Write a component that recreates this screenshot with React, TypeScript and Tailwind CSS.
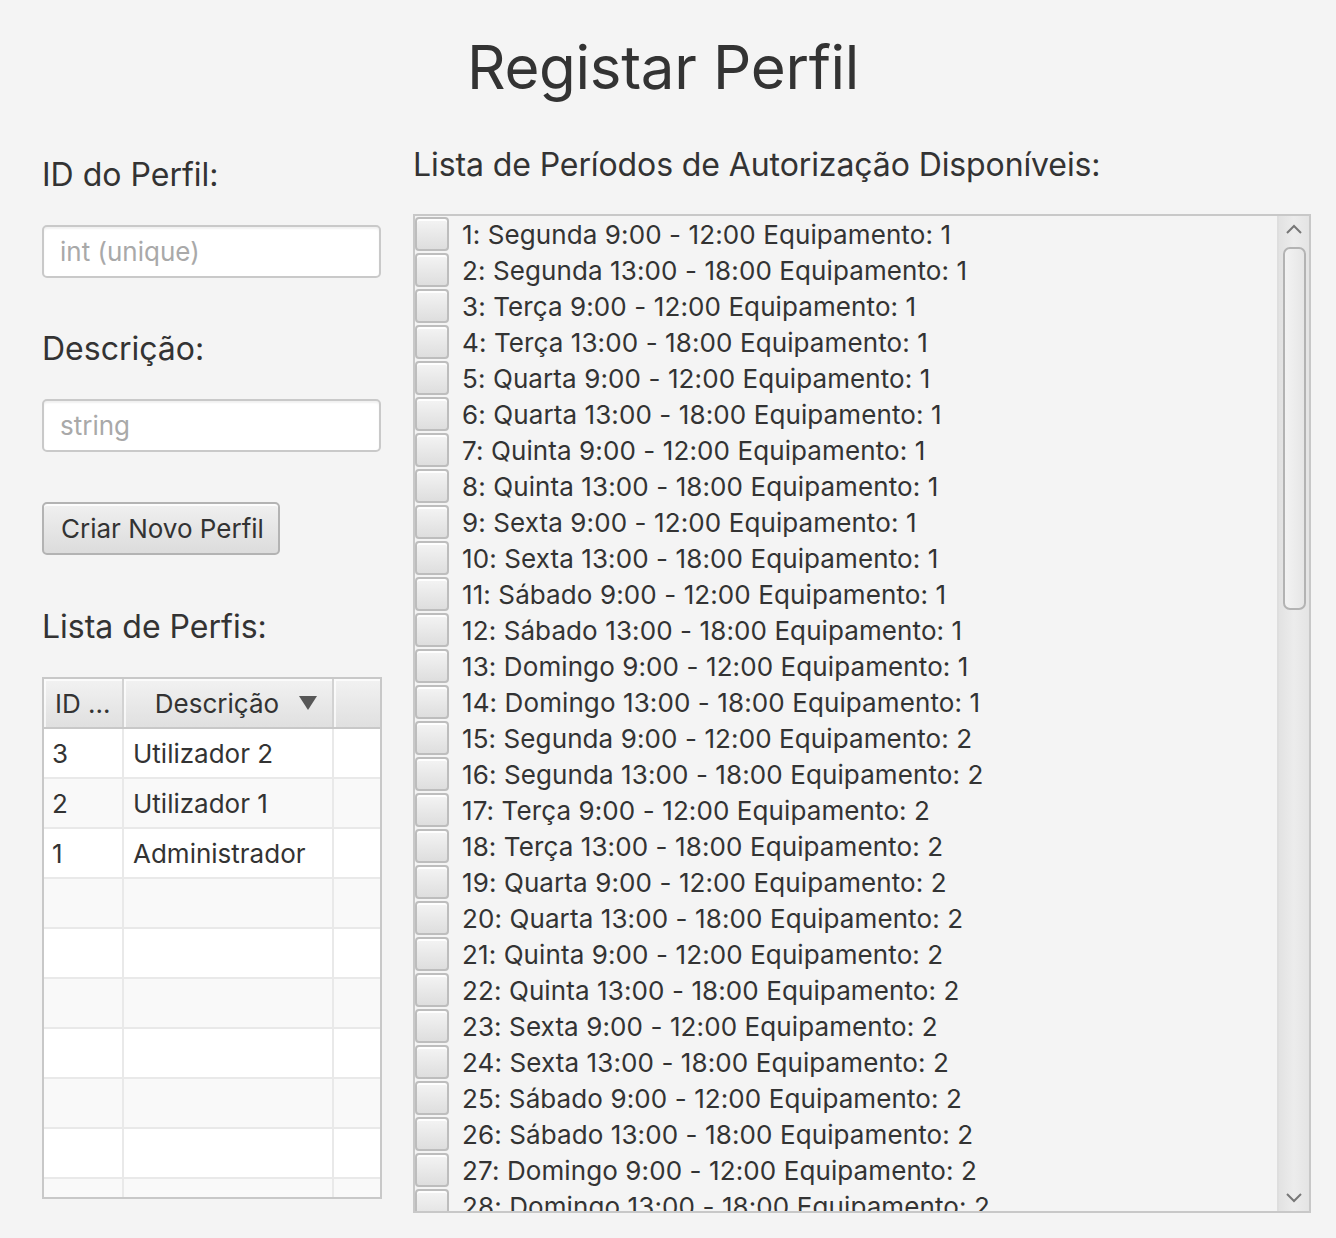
const dias = ["Segunda", "Terça", "Quarta", "Quinta", "Sexta", "Sábado", "Domingo"];

const periodos: string[] = [];
for (let eq = 1; eq <= 2; eq++) {
  dias.forEach((d) => {
    periodos.push(`${d} 9:00 - 12:00 Equipamento: ${eq}`);
    periodos.push(`${d} 13:00 - 18:00 Equipamento: ${eq}`);
  });
}

const perfis = [
  { id: "3", desc: "Utilizador 2" },
  { id: "2", desc: "Utilizador 1" },
  { id: "1", desc: "Administrador" },
];

const Field = ({ placeholder }: { placeholder: string }) => (
  <div className="h-[53px] w-[339px] rounded-[5px] border-2 border-[#c9c9c9] bg-white px-[16px] flex items-center shadow-[inset_0_2px_2px_rgba(0,0,0,0.06)]">
    <span className="text-[26px] text-[#a9a9a9]">{placeholder}</span>
  </div>
);

const CheckBox = () => (
  <div className="w-[34px] h-[34px] shrink-0 rounded-[4px] border-2 border-[#bdbdbd] bg-gradient-to-b from-[#f4f4f4] to-[#dedede] shadow-[inset_0_2px_0_rgba(255,255,255,0.9)]" />
);

const App = () => {
  const rows = Array.from({ length: 10 }, (_, i) => perfis[i]);

  return (
    <div className="min-h-screen bg-[#f4f4f4] text-[#333333] font-['Inter','Liberation_Sans',sans-serif]">
      <h1 className="text-center text-[60px] leading-[60px] pt-[37px] pr-[10px] tracking-[-0.3px]">Registar Perfil</h1>

      <div className="flex gap-[31px] pl-[42px] mt-[48px]">
        {/* coluna esquerda */}
        <div className="w-[340px] flex flex-col">
          <div className="mt-[10px] text-[32px] leading-[40px]">ID do Perfil:</div>
          <div className="mt-[30px]"><Field placeholder="int (unique)" /></div>
          <div className="mt-[51px] text-[32px] leading-[40px]">Descrição:</div>
          <div className="mt-[30px]"><Field placeholder="string" /></div>
          <button className="mt-[50px] self-start h-[53px] pl-[17px] pr-[14px] rounded-[5px] border-2 border-[#b3b3b3] bg-gradient-to-b from-[#f0f0f0] to-[#dcdcdc] text-[26px] text-[#333] shadow-[inset_0_2px_0_rgba(255,255,255,0.8)]">
            Criar Novo Perfil
          </button>
          <div className="mt-[52px] text-[32px] leading-[40px]">Lista de Perfis:</div>

          <div className="mt-[30px] w-[340px] h-[522px] border-2 border-[#c8c8c8] bg-white overflow-hidden">
            <div className="flex h-[50px] bg-gradient-to-b from-[#f2f2f2] to-[#e0e0e0] border-b-2 border-[#c8c8c8] text-[26px]">
              <div className="w-[80px] border-r-2 border-[#d2d2d2] flex items-center pl-[11px] shadow-[inset_2px_2px_0_rgba(255,255,255,0.7)]">ID ...</div>
              <div className="w-[210px] border-r-2 border-[#d2d2d2] flex items-center justify-center gap-[20px] pl-[16px] shadow-[inset_2px_2px_0_rgba(255,255,255,0.7)]">
                <span>Descrição</span>
                <svg width="18" height="14" viewBox="0 0 18 14"><path d="M0 0 H18 L9 14 Z" fill="#575757" /></svg>
              </div>
              <div className="flex-1 shadow-[inset_2px_2px_0_rgba(255,255,255,0.7)]" />
            </div>
            {rows.map((r, i) => (
              <div key={i} className={`flex h-[50px] border-b-2 border-[#e9e9e9] text-[26px] ${i % 2 === 0 ? "bg-white" : "bg-[#f9f9f9]"}`}>
                <div className="w-[80px] border-r-2 border-[#e9e9e9] flex items-center pl-[8px]">{r?.id}</div>
                <div className="w-[210px] border-r-2 border-[#e9e9e9] flex items-center pl-[9px]">{r?.desc}</div>
                <div className="flex-1" />
              </div>
            ))}
          </div>
        </div>

        {/* coluna direita */}
        <div className="w-[898px] flex flex-col">
          <div className="text-[32px] leading-[40px] tracking-[-0.1px]">Lista de Períodos de Autorização Disponíveis:</div>
          <div className="mt-[29px] h-[999px] border-2 border-[#c8c8c8] flex overflow-hidden">
            <div className="flex-1 overflow-hidden">
              {periodos.map((p, i) => (
                <div key={i} className="h-[36px] flex items-center gap-[13px]">
                  <CheckBox />
                  <span className="text-[26px] tracking-[0.1px] whitespace-nowrap">{`${i + 1}: ${p}`}</span>
                </div>
              ))}
            </div>
            <div className="w-[32px] border-l-2 border-[#dedede] bg-gradient-to-r from-[#e2e2e2] via-[#ececec] to-[#e4e4e4] flex flex-col items-center">
              <svg className="mt-[8px]" width="16" height="10" viewBox="0 0 16 10"><path d="M1 9 L8 2 L15 9" fill="none" stroke="#777" strokeWidth="2" /></svg>
              <div className="mt-[13px] w-[23px] h-[363px] rounded-[7px] border-2 border-[#b3b3b3] bg-gradient-to-r from-[#f3f3f3] to-[#e6e6e6]" />
              <div className="flex-1" />
              <svg className="mb-[8px]" width="16" height="10" viewBox="0 0 16 10"><path d="M1 1 L8 8 L15 1" fill="none" stroke="#777" strokeWidth="2" /></svg>
            </div>
          </div>
        </div>
      </div>
    </div>
  );
};

export default App;
